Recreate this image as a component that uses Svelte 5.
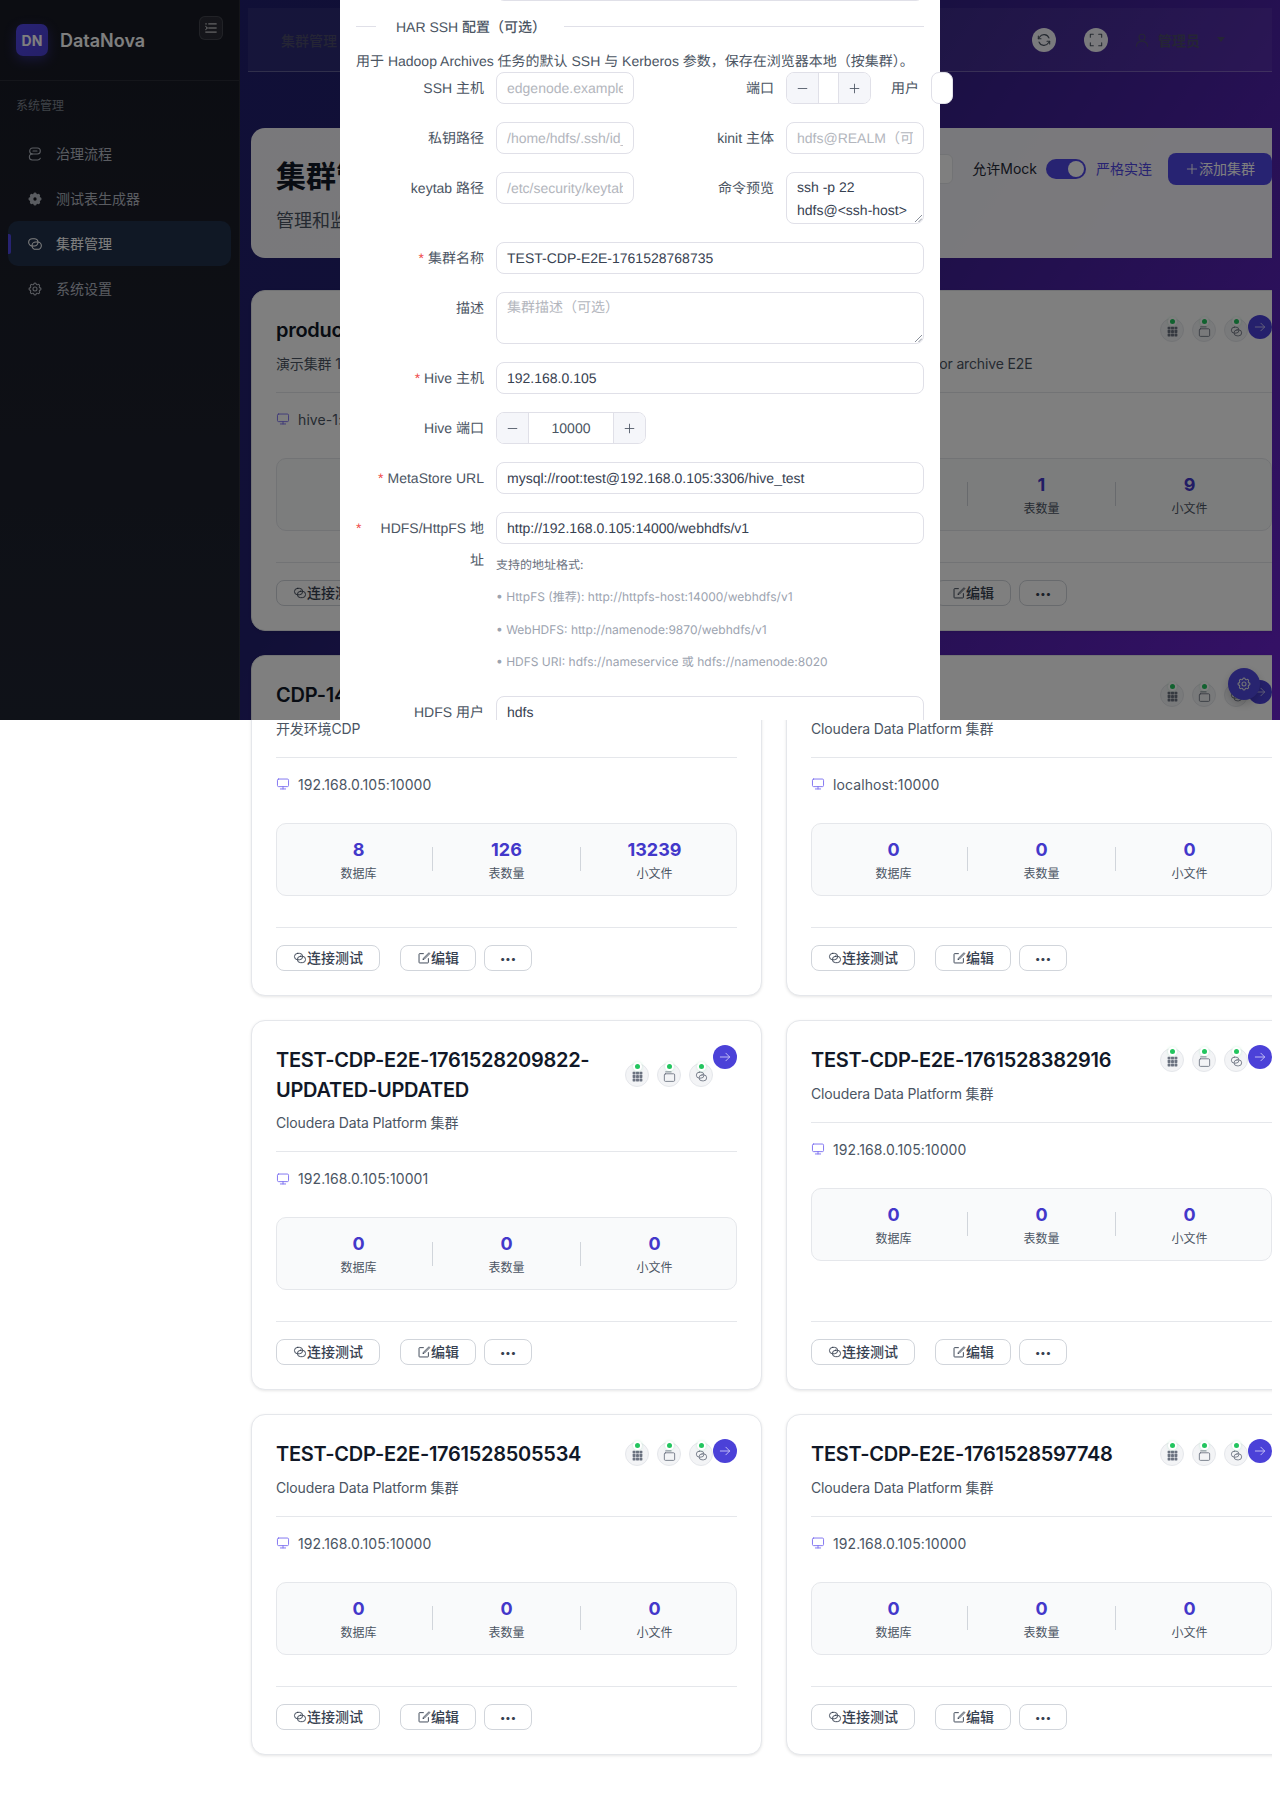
<script>
  const menu = [
    { label: "治理流程", icon: "flow" },
    { label: "测试表生成器", icon: "gearfill" },
    { label: "集群管理", icon: "link", active: true },
    { label: "系统设置", icon: "gear" },
  ];

  const clusters = [
    { title: "production", desc: "演示集群 1", host: "hive-1:10000", db: 3, tables: 12, files: 45 },
    { title: "archive-e2e", desc: "Temp cluster used for archive E2E", host: "localhost:10000", db: 1, tables: 1, files: 9 },
    { title: "CDP-146", desc: "开发环境CDP", host: "192.168.0.105:10000", db: 8, tables: 126, files: 13239 },
    { title: "Local CDP", desc: "Cloudera Data Platform 集群", host: "localhost:10000", db: 0, tables: 0, files: 0 },
    { title: "TEST-CDP-E2E-1761528209822-UPDATED-UPDATED", desc: "Cloudera Data Platform 集群", host: "192.168.0.105:10001", db: 0, tables: 0, files: 0 },
    { title: "TEST-CDP-E2E-1761528382916", desc: "Cloudera Data Platform 集群", host: "192.168.0.105:10000", db: 0, tables: 0, files: 0 },
    { title: "TEST-CDP-E2E-1761528505534", desc: "Cloudera Data Platform 集群", host: "192.168.0.105:10000", db: 0, tables: 0, files: 0 },
    { title: "TEST-CDP-E2E-1761528597748", desc: "Cloudera Data Platform 集群", host: "192.168.0.105:10000", db: 0, tables: 0, files: 0 },
  ];

  const statusIcons = ["grid", "box", "link"];
</script>

{#snippet icon(name)}
  <svg class="icon" viewBox="0 0 24 24" fill="none" stroke="currentColor" stroke-width="1.6" stroke-linecap="round" stroke-linejoin="round">
    {#if name === "link"}
      <rect x="2.5" y="4" width="14" height="11" rx="5.5" />
      <rect x="7.5" y="9" width="14" height="11" rx="5.5" />
    {:else if name === "flow"}
      <rect x="4" y="3" width="16" height="9" rx="4.5" />
      <path d="M8 12a4.500 4.500 0 0 0 0 9h8a4.500 4.500 0 0 0 4-2.500" />
      <path d="M9 7.500h6" />
    {:else if name === "gear" || name === "gearfill"}
      <path fill={name === "gearfill" ? "currentColor" : "none"} d="M10.325 4.317c.426-1.756 2.924-1.756 3.35 0a1.724 1.724 0 0 0 2.573 1.066c1.543-.94 3.31.826 2.37 2.37a1.724 1.724 0 0 0 1.065 2.572c1.756.426 1.756 2.924 0 3.35a1.724 1.724 0 0 0-1.066 2.573c.94 1.543-.826 3.31-2.37 2.37a1.724 1.724 0 0 0-2.572 1.065c-.426 1.756-2.924 1.756-3.35 0a1.724 1.724 0 0 0-2.573-1.066c-1.543.94-3.31-.826-2.37-2.37a1.724 1.724 0 0 0-1.065-2.572c-1.756-.426-1.756-2.924 0-3.35a1.724 1.724 0 0 0 1.066-2.573c-.94-1.543.826-3.31 2.37-2.37 1 .608 2.296.07 2.572-1.065z" />
      {#if name === "gearfill"}
        <circle cx="12" cy="12" r="2.5" stroke="none" fill="#12151d" />
      {:else}
        <circle cx="12" cy="12" r="3" />
      {/if}
    {:else if name === "grid"}
      <g fill="currentColor" stroke="none">
        <rect x="3" y="3" width="5.400" height="5.400" rx="0.800" /><rect x="9.300" y="3" width="5.400" height="5.400" rx="0.800" /><rect x="15.600" y="3" width="5.400" height="5.400" rx="0.800" />
        <rect x="3" y="9.300" width="5.400" height="5.400" rx="0.800" /><rect x="9.300" y="9.300" width="5.400" height="5.400" rx="0.800" /><rect x="15.600" y="9.300" width="5.400" height="5.400" rx="0.800" />
        <rect x="3" y="15.600" width="5.400" height="5.400" rx="0.800" /><rect x="9.300" y="15.600" width="5.400" height="5.400" rx="0.800" /><rect x="15.600" y="15.600" width="5.400" height="5.400" rx="0.800" />
      </g>
    {:else if name === "box"}
      <rect x="2.5" y="7" width="19" height="14" rx="2" />
      <path d="M5 3.500h10" />
    {:else if name === "monitor"}
      <rect x="2.5" y="3.5" width="19" height="13" rx="2" />
      <path d="M12 16.5v4M7.5 20.5h9" />
    {:else if name === "edit"}
      <path d="M11 4.5H4.5a1 1 0 0 0-1 1v14a1 1 0 0 0 1 1h14a1 1 0 0 0 1-1V13" />
      <path d="M20 3.5 11 12.5l-.8 2.3 2.3-.8 9-9z" />
    {:else if name === "arrow"}
      <path d="M4 12h16M13.5 5.5 20 12l-6.5 6.5" />
    {:else if name === "refresh"}
      <path d="M19.5 9A8 8 0 0 0 5.2 7.8L3.5 10M4.5 15a8 8 0 0 0 14.3 1.2l1.7-2.2" />
      <path d="M3.500 6v4h4M20.500 18v-4h-4" />
    {:else if name === "expand"}
      <path d="M3.5 8V3.5H8M16 3.5h4.5V8M20.5 16v4.5H16M8 20.5H3.5V16" />
    {:else if name === "user"}
      <circle cx="12" cy="8" r="4.5" />
      <path d="M3.5 21.5c.5-5 4-7.5 8.5-7.5s8 2.500 8.500 7.500" />
    {:else if name === "menu"}
      <path d="M8 5h13M8 12h13M3 19h18M3 5h1M3 9.500 6 12l-3 2.500" />
    {:else if name === "minus"}
      <path d="M4 12h16" />
    {:else if name === "plus"}
      <path d="M12 4v16M4 12h16" />
    {/if}
  </svg>
{/snippet}

{#snippet grip()}
  <svg class="grip" viewBox="0 0 8 8" fill="none" stroke="#6b7280" stroke-width="0.8"><path d="M1 8 8 1M4.500 8 8 4.500" /></svg>
{/snippet}

<div class="page">
  <aside class="sidebar">
    <div class="brand">
      <div class="logo">DN</div>
      <span class="brand-name">DataNova</span>
      <button class="collapse">{@render icon("menu")}</button>
    </div>
    <div class="group">系统管理</div>
    <nav>
      {#each menu as item}
        <div class="nav-item" class:active={item.active}>
          {@render icon(item.icon)}
          <span>{item.label}</span>
        </div>
      {/each}
    </nav>
  </aside>

  <main class="main">
    <header class="topbar">
      <span class="crumb">集群管理</span>
      <div class="top-actions">
        <button class="round">{@render icon("refresh")}</button>
        <button class="round">{@render icon("expand")}</button>
        <div class="account">
          {@render icon("user")}
          <span>管理员</span>
          <i class="caret"></i>
        </div>
      </div>
    </header>

    <div class="content">
      <section class="page-head">
        <div>
          <h1>集群管理</h1>
          <p>管理和监控您的集群</p>
        </div>
        <div class="head-controls">
          <div class="search"></div>
          <span class="mock">允许Mock</span>
          <span class="toggle"><i></i></span>
          <span class="strict">严格实连</span>
          <button class="add">{@render icon("plus")}<span>添加集群</span></button>
        </div>
      </section>

      <div class="grid">
        {#each clusters as c}
          <article class="card">
            <div class="card-top">
              <h2>{c.title}</h2>
              <div class="status">
                {#each statusIcons as s}
                  <span class="status-dot">{@render icon(s)}<i></i></span>
                {/each}
              </div>
              <button class="go">{@render icon("arrow")}</button>
            </div>
            <p class="desc">{c.desc}</p>
            <div class="host">{@render icon("monitor")}<span>{c.host}</span></div>
            <div class="stats">
              <div class="stat"><b>{c.db}</b><span>数据库</span></div>
              <i class="sep"></i>
              <div class="stat"><b>{c.tables}</b><span>表数量</span></div>
              <i class="sep"></i>
              <div class="stat"><b>{c.files}</b><span>小文件</span></div>
            </div>
            <div class="card-foot">
              <button class="btn">{@render icon("link")}连接测试</button>
              <button class="btn edit">{@render icon("edit")}编辑</button>
              <button class="btn more"><span class="dots">•••</span></button>
            </div>
          </article>
        {/each}
      </div>
    </div>
  </main>

  <button class="fab">{@render icon("gear")}</button>
  <div class="mask"></div>

  <div class="modal">
    <div class="form">
      <div class="field top"><span class="label"></span><div class="input"></div></div>

      <div class="divider"><i class="short"></i><span>HAR SSH 配置（可选）</span><i class="long"></i></div>
      <p class="note">用于 Hadoop Archives 任务的默认 SSH 与 Kerberos 参数，保存在浏览器本地（按集群）。</p>

      <div class="field">
        <span class="label">SSH 主机</span>
        <div class="input half ph"><span>edgenode.example.com</span></div>
        <span class="label second">端口</span>
        <div class="number tiny">
          <span class="step">{@render icon("minus")}</span>
          <span class="num"></span>
          <span class="step">{@render icon("plus")}</span>
        </div>
        <span class="label third">用户</span>
        <div class="input spill"></div>
      </div>
      <div class="field">
        <span class="label">私钥路径</span>
        <div class="input half ph"><span>/home/hdfs/.ssh/id_rsa</span></div>
        <span class="label second">kinit 主体</span>
        <div class="input half ph"><span>hdfs@REALM（可选）</span></div>
      </div>
      <div class="field">
        <span class="label">keytab 路径</span>
        <div class="input half ph"><span>/etc/security/keytabs/hdfs</span></div>
        <span class="label second">命令预览</span>
        <div class="input half area preview">ssh -p 22
hdfs@&lt;ssh-host&gt;{@render grip()}</div>
      </div>

      <div class="field">
        <span class="label"><em>*</em><span>集群名称</span></span>
        <div class="input">TEST-CDP-E2E-1761528768735</div>
      </div>
      <div class="field">
        <span class="label">描述</span>
        <div class="input area ph">集群描述（可选）{@render grip()}</div>
      </div>
      <div class="field">
        <span class="label"><em>*</em><span>Hive 主机</span></span>
        <div class="input">192.168.0.105</div>
      </div>
      <div class="field">
        <span class="label">Hive 端口</span>
        <div class="number wide">
          <span class="step">{@render icon("minus")}</span>
          <span class="num">10000</span>
          <span class="step">{@render icon("plus")}</span>
        </div>
      </div>
      <div class="field">
        <span class="label"><em>*</em><span>MetaStore URL</span></span>
        <div class="input">mysql://root:test@192.168.0.105:3306/hive_test</div>
      </div>
      <div class="field hdfs">
        <span class="label"><em>*</em><span class="wrap">HDFS/HttpFS 地址</span></span>
        <div class="control">
          <div class="input">http://192.168.0.105:14000/webhdfs/v1</div>
          <div class="help">
            <div class="help-title">支持的地址格式:</div>
            <ul>
              <li>• HttpFS (推荐): http://httpfs-host:14000/webhdfs/v1</li>
              <li>• WebHDFS: http://namenode:9870/webhdfs/v1</li>
              <li>• HDFS URI: hdfs://nameservice 或 hdfs://namenode:8020</li>
            </ul>
          </div>
        </div>
      </div>
      <div class="field">
        <span class="label">HDFS 用户</span>
        <div class="input">hdfs</div>
      </div>
    </div>
  </div>
</div>

<style>
  :global(body) {
    margin: 0;
    background: #fff;
  }

  .page {
    position: relative;
    display: flex;
    width: 1280px;
    min-height: 1819px;
    overflow: hidden;
    font-family: Inter, "Noto Sans CJK SC", sans-serif;
    font-size: 14px;
    color: #374151;
    background: linear-gradient(125deg, #201f6e 0%, #23206f 40%, #6c22d0 100%) 0 0 / 100% 720px no-repeat;
  }

  button {
    font: inherit;
    color: inherit;
    cursor: pointer;
  }

  .icon {
    display: block;
    width: 14px;
    height: 14px;
    flex-shrink: 0;
  }

  /* sidebar */
  .sidebar {
    flex-shrink: 0;
    width: 240px;
    height: 720px;
    box-sizing: border-box;
    background: linear-gradient(180deg, #181a24 0%, #1f2431 100%);
    border-right: 1px solid rgba(255, 255, 255, 0.07);
    color: #fff;
  }

  .brand {
    display: flex;
    align-items: center;
    position: relative;
    height: 81px;
    box-sizing: border-box;
    padding: 0 16px;
    border-bottom: 1px solid rgba(255, 255, 255, 0.08);
  }

  .logo {
    display: flex;
    align-items: center;
    justify-content: center;
    width: 32px;
    height: 32px;
    border-radius: 7px;
    background: linear-gradient(135deg, #5146e8, #4a3fd0);
    box-shadow: 0 4px 12px rgba(79, 70, 229, 0.4);
    font-size: 14px;
    font-weight: 700;
    color: #fff;
  }

  .brand-name {
    margin-left: 12px;
    font-size: 18px;
    font-weight: 600;
    color: #fff;
  }

  .collapse {
    position: absolute;
    left: 199px;
    top: 16px;
    display: flex;
    align-items: center;
    justify-content: center;
    width: 24px;
    height: 24px;
    padding: 0;
    border: 1px solid rgba(255, 255, 255, 0.12);
    border-radius: 6px;
    background: rgba(255, 255, 255, 0.08);
    color: #fff;
  }

  .group {
    padding: 16px 16px;
    font-size: 12px;
    line-height: 18px;
    color: #7f8590;
  }

  .nav-item {
    position: relative;
    display: flex;
    align-items: center;
    gap: 13px;
    height: 45px;
    margin: 0 8px;
    padding-left: 19px;
    border-radius: 10px;
    color: #b4b9c2;
  }

  .nav-item .icon {
    width: 16px;
    height: 16px;
  }

  .nav-item span {
    margin-top: -2px;
  }

  .nav-item.active {
    background: #20304a;
    color: #fff;
  }

  .nav-item.active::before {
    content: "";
    position: absolute;
    left: 0;
    top: 13px;
    width: 3px;
    height: 20px;
    background: #4f46e5;
    border-radius: 0 2px 2px 0;
  }

  /* main */
  .main {
    flex: 1;
    min-width: 0;
    margin-right: 8px;
    overflow: hidden;
  }

  .topbar {
    display: flex;
    align-items: center;
    justify-content: space-between;
    height: 64px;
    box-sizing: border-box;
    margin: 8px 0 0 8px;
    padding: 0 47px 0 33px;
    background: rgba(255, 255, 255, 0.05);
    border-bottom: 1px solid rgba(255, 255, 255, 0.25);
  }

  .crumb {
    font-weight: 500;
    color: #4a4a6a;
  }

  .top-actions {
    display: flex;
    align-items: center;
    gap: 28px;
  }

  .round {
    display: flex;
    align-items: center;
    justify-content: center;
    width: 24px;
    height: 24px;
    padding: 0;
    border: none;
    border-radius: 50%;
    background: rgba(255, 255, 255, 0.95);
    color: #4b5563;
  }

  .round .icon {
    width: 16px;
    height: 16px;
  }

  .account {
    display: flex;
    align-items: center;
    margin-left: -2px;
    font-weight: 600;
    color: #4b4b6b;
  }

  .account .icon {
    width: 16px;
    height: 16px;
    margin-right: 8px;
  }

  .caret {
    width: 0;
    height: 0;
    margin-left: 17px;
    border: 4px solid transparent;
    border-top: 5px solid #4b4b6b;
    border-bottom: none;
  }

  .content {
    width: 1046px;
    padding: 56px 0 64px 11px;
  }

  .page-head {
    display: flex;
    justify-content: space-between;
    height: 130px;
    box-sizing: border-box;
    padding: 25px;
    margin-bottom: 32px;
    border-radius: 14px;
    background: rgba(255, 255, 255, 0.94);
  }

  .page-head h1 {
    margin: 0;
    font-size: 30px;
    font-weight: 700;
    line-height: 46px;
    color: #111827;
  }

  .page-head p {
    margin: 9px 0 0;
    font-size: 18px;
    line-height: 26px;
    color: #4b5563;
  }

  .head-controls {
    display: flex;
    align-items: center;
    height: 32px;
  }

  .search {
    width: 240px;
    height: 30px;
    box-sizing: border-box;
    margin-right: 18px;
    border: 1px solid #e5e7eb;
    border-radius: 6px;
    background: #fff;
  }

  .mock {
    margin: -2px 9px 0 1px;
    color: #1f2937;
  }

  .toggle {
    display: flex;
    align-items: center;
    justify-content: flex-end;
    width: 40px;
    height: 20px;
    box-sizing: border-box;
    padding: 2px;
    border-radius: 10px;
    background: #4f46e5;
  }

  .toggle i {
    width: 16px;
    height: 16px;
    border-radius: 50%;
    background: #fff;
  }

  .strict {
    margin: -2px 16px 0 10px;
    color: #4f46e5;
  }

  .add {
    display: flex;
    align-items: center;
    justify-content: center;
    width: 104px;
    height: 32px;
    padding: 0;
    border: none;
    border-radius: 8px;
    background: #4f46e5;
    color: #fff;
  }

  .add span {
    margin-top: -2px;
  }

  .grid {
    display: grid;
    grid-template-columns: 511px 511px;
    gap: 24px;
  }

  .card {
    display: flex;
    flex-direction: column;
    min-height: 341px;
    box-sizing: border-box;
    padding: 24px;
    border: 1px solid #e5e7eb;
    border-radius: 14px;
    background: #fff;
    box-shadow: 0 1px 3px rgba(0, 0, 0, 0.1);
  }

  .card-top {
    display: flex;
    align-items: center;
  }

  .card-top h2 {
    flex: 1;
    min-width: 0;
    margin: 0 8px 0 0;
    padding-top: 1px;
    font-size: 20px;
    font-weight: 600;
    line-height: 29.5px;
    letter-spacing: -0.27px;
    color: #111827;
  }

  .status {
    display: flex;
    gap: 8px;
  }

  .status-dot {
    position: relative;
    display: flex;
    align-items: center;
    justify-content: center;
    width: 24px;
    height: 24px;
    box-sizing: border-box;
    border: 1px solid #e5e7eb;
    border-radius: 50%;
    background: #f3f4f6;
    color: #6b7280;
  }

  .status-dot .icon {
    width: 13px;
    height: 13px;
    margin-top: 2px;
  }

  .status-dot i {
    position: absolute;
    top: 0;
    left: calc(50% - 2px);
    width: 5px;
    height: 5px;
    border-radius: 50%;
    background: #22c55e;
    box-shadow: 0 0 0 2px #fff, 0 0 3px 2px rgba(34, 197, 94, 0.2);
  }

  .go {
    align-self: flex-start;
    display: flex;
    align-items: center;
    justify-content: center;
    width: 24px;
    height: 24px;
    padding: 0;
    border: none;
    border-radius: 50%;
    background: #4b41d8;
    color: #c7c3f5;
  }

  .desc {
    margin: 7px 0 0;
    padding-bottom: 18px;
    border-bottom: 1px solid #e5e7eb;
    line-height: 21px;
    letter-spacing: -0.14px;
    color: #4b5563;
  }

  .host {
    display: flex;
    align-items: center;
    gap: 8px;
    margin-top: 16px;
    line-height: 21px;
    letter-spacing: 0.1px;
    color: #4b5563;
  }

  .host .icon {
    color: #7c6ff0;
  }

  .stats {
    display: flex;
    align-items: center;
    margin: 28px 0 31px;
    padding: 12px 8px;
    height: 73px;
    box-sizing: border-box;
    border: 1px solid #e5e7eb;
    border-radius: 10px;
    background: #f9fafb;
  }

  .stat {
    flex: 1;
    display: flex;
    flex-direction: column;
    align-items: center;
  }

  .stat b {
    font-size: 18px;
    font-weight: 700;
    line-height: 27px;
    color: #4338ca;
  }

  .stat span {
    margin-top: 2px;
    font-size: 12px;
    line-height: 18px;
    color: #4b5563;
  }

  .sep {
    width: 1px;
    height: 24px;
    background: #d1d5db;
  }

  .card-foot {
    display: flex;
    margin-top: auto;
    padding-top: 17px;
    border-top: 1px solid #e5e7eb;
  }

  .btn {
    display: flex;
    align-items: center;
    height: 26px;
    padding: 0 16px;
    border: 1px solid #d1d5db;
    border-radius: 8px;
    background: #fff;
    font-weight: 500;
    line-height: 1;
    color: #374151;
  }

  .btn.edit {
    margin-left: 20px;
  }

  .btn.more {
    width: 48px;
    margin-left: 8px;
    justify-content: center;
    padding: 0;
  }

  .dots {
    font-size: 10px;
    letter-spacing: 0;
  }

  .fab {
    position: absolute;
    left: 1228px;
    top: 668px;
    display: flex;
    align-items: center;
    justify-content: center;
    width: 32px;
    height: 32px;
    padding: 0;
    border: none;
    border-radius: 50%;
    background: #5149e0;
    box-shadow: 0 4px 10px rgba(0, 0, 0, 0.2);
    color: #e5e7eb;
  }

  .fab .icon {
    width: 16px;
    height: 16px;
  }

  .mask {
    position: absolute;
    left: 0;
    top: 0;
    width: 100%;
    height: 720px;
    background: rgba(0, 0, 0, 0.5);
  }

  /* modal */
  .modal {
    position: absolute;
    left: 340px;
    top: 0;
    width: 600px;
    height: 720px;
    overflow-x: visible;
    overflow-y: clip;
    background: #fff;
    font-family: "Liberation Sans", "Noto Sans CJK SC", sans-serif;
    text-rendering: geometricPrecision;
  }

  .form {
    margin-top: -31px;
    padding: 0 16px;
  }

  .field {
    display: flex;
    margin-bottom: 18px;
  }

  .field.top {
    margin-bottom: 14px;
  }

  .label {
    display: flex;
    justify-content: flex-end;
    flex-shrink: 0;
    box-sizing: border-box;
    width: 140px;
    padding-right: 12px;
    line-height: 32px;
    text-align: right;
    color: #4b5563;
  }

  .label em {
    margin-right: 4px;
    font-style: normal;
    color: #ef4444;
  }

  .label .wrap {
    flex: 1;
    padding-left: 12px;
  }

  .label.second {
    width: 152px;
  }

  .label.third {
    width: 60px;
  }

  .input {
    position: relative;
    flex: 1;
    min-width: 0;
    height: 32px;
    box-sizing: border-box;
    padding: 0 10px 0 10px;
    border: 1px solid #e0e0e8;
    border-radius: 8px;
    background: #fff;
    line-height: 30px;
    white-space: nowrap;
    color: #374151;
  }

  .input span {
    display: block;
    overflow: hidden;
  }

  .ph {
    color: #b3b6bd;
  }

  .input.half {
    flex: none;
    width: 138px;
  }

  .input.area {
    height: 52px;
    padding-top: 3px;
    line-height: 22.500px;
    white-space: normal;
  }

  .input.preview {
    white-space: pre-line;
    color: #374151;
  }

  .input.spill {
    flex: none;
    width: 22px;
    padding: 0;
  }

  .grip {
    position: absolute;
    right: 1px;
    bottom: 1px;
    width: 8px;
    height: 8px;
  }

  .number {
    display: flex;
    height: 32px;
    box-sizing: border-box;
    border: 1px solid #e0e0e8;
    border-radius: 8px;
    overflow: hidden;
    flex-shrink: 0;
    color: #4b5563;
  }

  .number.tiny {
    width: 85px;
  }

  .number.wide {
    width: 150px;
  }

  .step {
    display: flex;
    align-items: center;
    justify-content: center;
    width: 31px;
    background: #f5f6fa;
  }

  .step .icon {
    width: 13px;
    height: 13px;
  }

  .num {
    flex: 1;
    border-left: 1px solid #e0e0e8;
    border-right: 1px solid #e0e0e8;
    line-height: 30px;
    text-align: center;
  }

  .divider {
    display: flex;
    align-items: center;
    height: 22px;
    font-weight: 500;
    color: #4b5563;
  }

  .divider i {
    height: 1px;
    background: #e0e0e8;
  }

  .divider .short {
    width: 20px;
  }

  .divider .long {
    flex: 1;
  }

  .divider span {
    padding: 2px 18px 0 20px;
  }

  .note {
    margin: 14px 0 0;
    line-height: 21px;
    height: 21px;
    white-space: nowrap;
    color: #4b5563;
  }

  .field.hdfs {
    margin-bottom: 24.5px;
  }

  .control {
    flex: 1;
    min-width: 0;
  }

  .help {
    margin-top: 11.5px;
    font-family: Inter, "Noto Sans CJK SC", sans-serif;
    font-size: 12px;
    line-height: 18px;
    color: #6b7280;
  }

  .help ul {
    margin: 2px 0 0;
    padding: 0;
    list-style: none;
    color: #9ca3af;
  }

  .help li {
    margin-top: 14.5px;
  }
</style>
